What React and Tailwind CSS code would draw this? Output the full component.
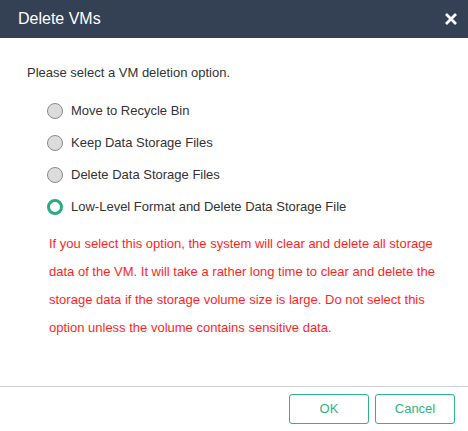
const options = [
  'Move to Recycle Bin',
  'Keep Data Storage Files',
  'Delete Data Storage Files',
  'Low-Level Format and Delete Data Storage File',
];

function Radio({ checked }) {
  if (checked) {
    return <span className="w-[16px] h-[16px] rounded-full border-[3px] border-[#2bab7f] bg-white shrink-0" />;
  }
  return <span className="w-[16px] h-[16px] rounded-full border border-[#8a8a8a] bg-[#dcdcdc] shrink-0" />;
}

export default function App() {
  return (
    <div className="w-[468px] h-[431px] bg-white flex flex-col font-['Liberation_Sans',Arial,sans-serif]">
      <div className="h-[38px] bg-[#344054] flex items-center justify-between pl-[18px] pr-[10px]">
        <span className="text-white text-[16px]">Delete VMs</span>
        <svg width="14" height="14" viewBox="0 0 14 14">
          <path d="M2 2 L12 12 M12 2 L2 12" stroke="#fff" strokeWidth="2.8" />
        </svg>
      </div>

      <div className="flex-1 pl-[27px] pt-[27px]">
        <p className="text-[13px] text-[#333] leading-[16px]">Please select a VM deletion option.</p>
        <div className="mt-[22px] pl-[20px] flex flex-col gap-4">
          {options.map((o, i) => (
            <label key={o} className="flex items-center gap-[8px] h-[16px] text-[13px] text-[#333] leading-[16px]">
              <Radio checked={i === 3} />
              <span>{o}</span>
            </label>
          ))}
        </div>
        <p className="mt-[15px] ml-[22px] w-[398px] text-[13px] leading-[28px] text-[#ff1f1f]">
          If you select this option, the system will clear and delete all storage data of the VM. It will take a rather long time to clear and delete the storage data if the storage volume size is large. Do not select this option unless the volume contains sensitive data.
        </p>
      </div>

      <div className="h-[45px] border-t border-[#cfcfdc] flex items-center justify-end gap-[6px] pr-[13px] pb-[1px]">
        <button className="w-[80px] h-[30px] rounded-[3px] border border-[#2eb584] text-[#2eb584] text-[13px] bg-white">OK</button>
        <button className="w-[80px] h-[30px] rounded-[3px] border border-[#2eb584] text-[#2eb584] text-[13px] bg-white">Cancel</button>
      </div>
    </div>
  );
}
